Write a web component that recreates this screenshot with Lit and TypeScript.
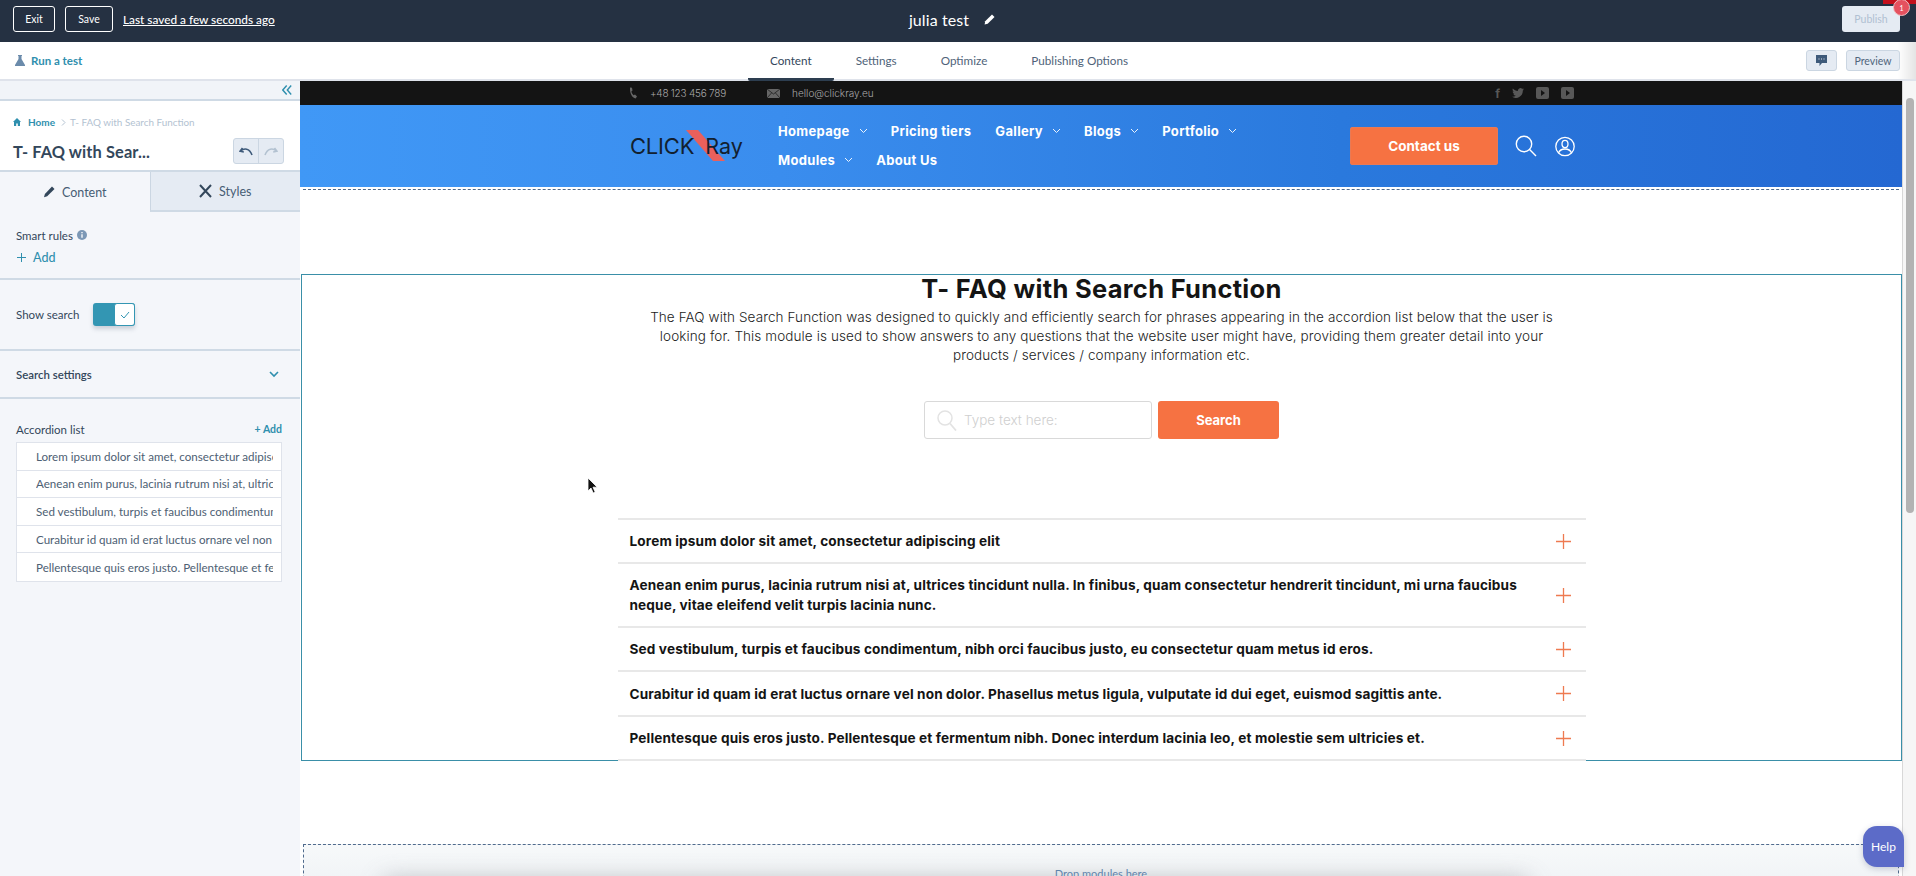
import { LitElement, html, css } from "lit";
import { customElement } from "lit/decorators.js";

const chev = html`<svg class="chev" width="9" height="6" viewBox="0 0 9 6"><path d="M1 1l3.5 3.5L8 1" fill="none" stroke="currentColor" stroke-width="1"/></svg>`;
const plus = html`<svg class="plus" width="15" height="15" viewBox="0 0 15 15"><path d="M7.5 0v15M0 7.5h15" stroke="#ee7a50" stroke-width="1.3" fill="none"/></svg>`;
const ytIcon = html`<svg width="13" height="12" viewBox="0 0 13 12"><rect width="13" height="12" rx="2" fill="#585858"/><path d="M5 3l4 3-4 3z" fill="#141414"/></svg>`;

const faq: any[] = [
  html`Lorem ipsum dolor sit amet, consectetur adipiscing elit`,
  html`Aenean enim purus, lacinia rutrum nisi at, ultrices tincidunt nulla. In finibus, quam consectetur hendrerit tincidunt, mi urna faucibus<br />neque, vitae eleifend velit turpis lacinia nunc.`,
  html`Sed vestibulum, turpis et faucibus condimentum, nibh orci faucibus justo, eu consectetur quam metus id eros.`,
  html`Curabitur id quam id erat luctus ornare vel non dolor. Phasellus metus ligula, vulputate id dui eget, euismod sagittis ante.`,
  html`Pellentesque quis eros justo. Pellentesque et fermentum nibh. Donec interdum lacinia leo, et molestie sem ultricies et.`,
];
const rowClass = ["r44", "r64", "r44", "r45", "r44"];
const items = [
  "Lorem ipsum dolor sit amet, consectetur adipiscing elit",
  "Aenean enim purus, lacinia rutrum nisi at, ultrices tincidunt nulla",
  "Sed vestibulum, turpis et faucibus condimentum, nibh orci",
  "Curabitur id quam id erat luctus ornare vel non dolor",
  "Pellentesque quis eros justo. Pellentesque et fermentum nibh",
];

@customElement("app-root")
export class AppRoot extends LitElement {
  static styles = css`
    :host { display: block; width: 100%; height: 100vh; overflow: hidden; position: relative; font-family: "Lato", "Noto Sans", sans-serif; color: #33475b; background: #fff; }
    * { box-sizing: border-box; }
    .top { height: 42px; background: #253142; display: grid; grid-template-columns: 1fr auto 1fr; align-items: center; padding: 0 16px 4px 13px; color: #fff; }
    .top-left { display: flex; align-items: center; gap: 10px; }
    .btn-o { height: 26px; border: 1px solid #fff; border-radius: 3px; font-size: 10.5px; display: flex; align-items: center; justify-content: center; }
    .exit { width: 42px; } .save { width: 48px; }
    .saved { font-size: 11.8px; text-decoration: underline; font-weight: 500; }
    .title { display: flex; align-items: center; gap: 15px; font-size: 16px; margin-left: -9px; letter-spacing: .1px; }
    .top-right { display: flex; justify-content: flex-end; }
    .publish { width: 58px; height: 26px; background: #e5ebf3; border-radius: 3px; color: #b0c0d2; font-size: 10.5px; display: flex; align-items: center; justify-content: center; }
    .notif-blob { position: absolute; right: 0; top: 0; width: 33px; height: 4px; background: #c4101c; }
    .notif { position: absolute; left: 1893px; top: -1px; width: 17px; height: 17px; border-radius: 50%; background: #e5515f; border: 1px solid #eebfc3; color: #fff; font-size: 7px; display: flex; align-items: center; justify-content: center; }

    .sub { height: 39px; border-bottom: 2px solid #dfe3eb; background: linear-gradient(90deg, #fff 1898px, #e4e4e4 1916px); display: grid; grid-template-columns: 1fr auto 1fr; align-items: stretch; padding: 0 16px 0 15px; }
    .run { display: flex; align-items: center; gap: 6px; font-size: 11.5px; font-weight: 700; color: #2f8fae; }
    .tabs { display: flex; font-size: 11.7px; color: #4f6379; margin-left: -17px; }
    .tab { display: flex; align-items: center; justify-content: center; padding: 0 22px; margin-bottom: -2px; border-bottom: 3px solid transparent; }
    .tab.on { color: #33475b; border-bottom-color: #2d3e50; border-radius: 2px; }
    .sub-right { display: flex; justify-content: flex-end; align-items: flex-start; gap: 9px; padding-top: 8px; }
    .sq { height: 21px; background: #e5ebf3; border: 1px solid #cbd6e2; border-radius: 3px; display: flex; align-items: center; justify-content: center; font-size: 10.5px; color: #50657c; }
    .sq.c { width: 31px; } .sq.p { width: 54px; }

    .body { display: flex; height: calc(100vh - 81px); }
    .panel { width: 300px; flex: none; background: #f4f6fa; display: flex; flex-direction: column; }
    .collapse { height: 20px; border-bottom: 2px solid #cfdae5; display: flex; align-items: center; justify-content: flex-end; padding-right: 8px; background: #f1f4f8; }
    .crumbhead { background: #fff; height: 71px; border-bottom: 2px solid #cfdae5; padding: 14px 16px 0 13px; }
    .crumbs { display: flex; align-items: center; font-size: 9.9px; height: 14px; color: #b3c2d1; }
    .crumbs .home { color: #2f8fae; font-weight: 700; margin: 0 6px 0 7px; font-size: 10px; }
    .crumbs .gt { margin-right: 4px; }
    .titlerow { display: flex; justify-content: space-between; align-items: center; margin-top: 9px; }
    .ptitle { font-size: 16.4px; font-weight: 700; color: #33475b; letter-spacing: 0.1px; }
    .undo { display: flex; width: 51px; height: 26px; background: #e5ebf3; border: 1px solid #cbd6e2; border-radius: 3px; }
    .undo span { flex: 1; display: flex; align-items: center; justify-content: center; }
    .undo span + span { border-left: 1px solid #cbd6e2; }
    .ptabs { display: flex; height: 40px; font-size: 12.5px; color: #475d74; flex: none; }
    .ptab { flex: 1; display: flex; align-items: center; justify-content: center; gap: 7px; }
    .ptab.off { background: #e5ebf3; border-left: 1px solid #cbd6e2; border-bottom: 2px solid #cfdae5; }
    .sec { padding: 0 16px; border-bottom: 2px solid #cfdae5; font-size: 11.5px; color: #33475b; flex: none; }
    .smart { height: 68px; padding-top: 16px; }
    .lbl-row { display: flex; align-items: center; gap: 4px; font-size: 11.5px; height: 14px; }
    .add { display: flex; align-items: center; gap: 7px; color: #2f8fae; font-size: 12.5px; font-weight: 500; margin-top: 8px; height: 14px; padding-left: 1px; }
    .show { height: 71px; display: flex; align-items: flex-start; gap: 14px; padding-top: 23px; }
    .show .t { line-height: 23px; }
    .toggle { width: 42px; height: 23px; border-radius: 3px; background: #3396b3; display: flex; justify-content: flex-end; box-shadow: 0 3px 4px rgba(80,100,120,.25); }
    .knob { width: 21px; height: 23px; background: #fff; border: 1px solid #3396b3; border-radius: 3px; display: flex; align-items: center; justify-content: center; }
    .settings { height: 48px; display: flex; align-items: center; justify-content: space-between; font-weight: 600; font-size: 11.4px; padding-right: 21px; padding-top: 1px; }
    .acc { padding: 22px 18px 0 16px; font-size: 11.5px; }
    .acc-head { display: flex; justify-content: space-between; align-items: center; height: 16px; color: #33475b; }
    .acc-add { color: #2f8fae; font-weight: 700; font-size: 10.5px; }
    .list { margin-top: 5px; border: 1px solid #dfe3eb; background: #fff; }
    .li { height: 27.6px; padding: 0 8px 0 19px; display: flex; align-items: center; border-bottom: 1px solid #dfe3eb; overflow: hidden; white-space: nowrap; color: #4d6073; font-size: 11.6px; }
    .li span { display: block; overflow: hidden; width: 100%; }
    .li:last-child { border-bottom: 0; }

    .canvas { width: 1602px; flex: none; background: #fff; display: flex; flex-direction: column; position: relative; font-family: "Inter", sans-serif; }
    .strip { height: 24px; flex: none; background: #141414; display: flex; align-items: center; padding-left: 329px; padding-right: 328px; color: #a8a8a8; font-size: 10px; font-weight: 300; }
    .strip .mail { margin-left: 41px; display: flex; gap: 12px; align-items: center; }
    .strip .phone { display: flex; align-items: center; gap: 13px; letter-spacing: -.22px; }
    .social { margin-left: auto; display: flex; gap: 12px; align-items: center; color: #585858; font-size: 12px; font-weight: 700; }
    .hdr { height: 82px; flex: none; background: linear-gradient(90deg, #4098f6 0%, #3a8dee 30%, #2a79dd 65%, #2468d2 100%); display: flex; align-items: center; padding-left: 330px; }
    .logo { width: 148px; flex: none; height: 40px; display: flex; align-items: center; position: relative; }
    .logo-text { color: #12202f; font-size: 22px; font-weight: 400; letter-spacing: -0.2px; display: flex; align-items: baseline; position: relative; }
    .logo-text .ray { font-size: 21.5px; letter-spacing: 0; margin-left: 11px; font-weight: 400; }
    .slash { position: absolute; left: 56px; top: 4px; }
    .nav { width: 572px; flex: none; display: flex; flex-wrap: wrap; color: #fff; font-size: 13px; font-weight: 700; row-gap: 9px; margin-top: -2px; }
    .nav a { display: flex; align-items: center; height: 20px; margin-right: 24px; letter-spacing: 0.32px; }
    .nav .chev { margin-left: 9px; margin-right: -1px; opacity: .9; }
    .contact { width: 148px; height: 38px; flex: none; background: #f67242; border-radius: 3px; color: #fff; font-size: 13.5px; font-weight: 700; display: flex; align-items: center; justify-content: center; box-shadow: 0 0 0 1px #e97a55 inset; }
    .hicons { display: flex; gap: 18px; margin-left: 17px; align-items: center; }
    .dash { height: 3px; margin: 2px 3px 0 3px; border-top: 1px dashed #506b8d; flex: none; }
    .module { margin: 82px 0 0 1px; height: 487px; border: 1px solid #3a8fa8; display: flex; flex-direction: column; align-items: center; flex: none; }
    .module h1 { margin: 0; font-size: 25.5px; line-height: 28px; font-weight: 700; color: #141414; letter-spacing: 0.3px; }
    .module p { margin: 5px 0 0; width: 920px; text-align: center; font-size: 13.5px; line-height: 19px; font-weight: 300; color: #1c1c1c; letter-spacing: 0.1px; }
    .searchrow { margin-top: 36px; display: flex; gap: 6px; }
    .input { width: 228px; height: 38px; border: 1px solid #d9d9d9; border-radius: 3px; display: flex; align-items: center; gap: 7px; padding-left: 12px; font-size: 13.5px; font-weight: 300; color: #cfcfcf; }
    .sbtn { width: 121px; height: 38px; background: #f67242; border-radius: 3px; color: #fff; font-size: 13px; font-weight: 700; display: flex; align-items: center; justify-content: center; }
    .accordion { margin-top: 79px; width: 968px; border-top: 2px solid #e8e8e8; background: #fff; margin-bottom: -1px; position: relative; }
    .row { display: flex; justify-content: space-between; align-items: center; padding: 0 15px 0 12px; border-bottom: 2px solid #e8e8e8; font-size: 13.6px; font-weight: 700; line-height: 20px; color: #141414; letter-spacing: 0.14px; }
    .r44 { height: 44px; } .r64 { height: 64px; } .r45 { height: 45px; }
    .drop { margin: 83px 3px 0 3px; height: 40px; flex: none; border: 1px dashed #506b8d; border-bottom: 0; background: linear-gradient(#f7f9fa, #f0f3f6); position: relative; overflow: hidden; text-align: center; font-size: 11px; font-family: "Lato", sans-serif; color: #5f84ad; padding-top: 22px; }
    .drop::before { content: ""; position: absolute; left: 80px; right: 370px; bottom: -22px; height: 26px; background: #a9adb1; filter: blur(12px); opacity: .8; }
    .drop span { position: relative; }
    .help { position: absolute; right: -2px; bottom: 9px; width: 41px; height: 41px; background: #5c6bc8; border-radius: 14px 14px 0 14px; color: #fff; font-size: 12px; font-family: "Lato", sans-serif; display: flex; align-items: center; justify-content: center; box-shadow: 0 2px 6px rgba(60,70,110,.25); z-index: 2; }
    .sbar { flex: 1; background: #f6f6f6; border-left: 1px solid #d8d8d8; padding: 17px 2px 0 3px; }
    .thumb { height: 415px; background: #b3b3b3; border-radius: 4px; }
    .cursor { position: absolute; left: 587px; top: 477px; }
  `;

  render() {
    return html`
      <div class="top">
        <div class="top-left">
          <div class="btn-o exit">Exit</div>
          <div class="btn-o save">Save</div>
          <div class="saved">Last saved a few seconds ago</div>
        </div>
        <div class="title"><span>julia test</span>
          <svg width="11" height="11" viewBox="0 0 11 11"><path d="M8 .5l2.5 2.5-6.8 6.8L.6 10.400l.6-3.100z" fill="#fff"/></svg>
        </div>
        <div class="top-right"><div class="publish">Publish</div></div>
      </div>
      <div class="notif-blob"></div>
      <div class="notif">1</div>
      <div class="sub">
        <div class="run">
          <svg width="10" height="11" viewBox="0 0 10 11"><path d="M3 0h4v1H6.500v3L10 10v1H0v-1l3.500-6V1H3z" fill="#6b8bab"/></svg>
          Run a test
        </div>
        <div class="tabs">
          <div class="tab on">Content</div><div class="tab">Settings</div><div class="tab">Optimize</div><div class="tab">Publishing Options</div>
        </div>
        <div class="sub-right">
          <div class="sq c"><svg width="11" height="11" viewBox="0 0 11 11"><path d="M0 0h11v8H6l-2.500 3V8H0z" fill="#3e5a7a"/><path d="M2.500 4h1M5 4h1M7.500 4h1" stroke="#e5ebf3" stroke-width="1"/></svg></div>
          <div class="sq p">Preview</div>
        </div>
      </div>
      <div class="body">
        <div class="panel">
          <div class="collapse">
            <svg width="10" height="10" viewBox="0 0 10 10"><path d="M4.700 .5L.8 5l3.900 4.500M9.200 .5L5.300 5l3.900 4.500" fill="none" stroke="#2f8fae" stroke-width="1.400"/></svg>
          </div>
          <div class="crumbhead">
            <div class="crumbs">
              <svg width="8" height="8" viewBox="0 0 8 8"><path d="M4 0L0 4h1v4h2.200V5.400h1.600V8H7V4h1z" fill="#2f8fae"/></svg>
              <span class="home">Home</span>
              <svg class="gt" width="5" height="7" viewBox="0 0 5 7"><path d="M1 .5l3 3-3 3" fill="none" stroke="#b3c2d1"/></svg>
              <span>T- FAQ with Search Function</span>
            </div>
            <div class="titlerow">
              <div class="ptitle">T- FAQ with Sear...</div>
              <div class="undo">
                <span><svg width="14" height="9" viewBox="0 0 14 9"><path d="M3.500 1L1 4.200 4.800 5M1.500 4.200C5 .8 10.500 1 13 8" fill="none" stroke="#3e5a7a" stroke-width="1.600"/></svg></span>
                <span><svg width="14" height="9" viewBox="0 0 14 9"><path d="M10.500 1L13 4.200 9.200 5M12.500 4.200C9 .8 3.500 1 1 8" fill="none" stroke="#b3c2d1" stroke-width="1.600"/></svg></span>
              </div>
            </div>
          </div>
          <div class="ptabs">
            <div class="ptab">
              <svg width="12" height="12" viewBox="0 0 12 12"><path d="M9 .5l2.500 2.500-7.300 7.300-3.200.9.900-3.200z" fill="#33475b"/></svg>Content
            </div>
            <div class="ptab off">
              <svg width="13" height="14" viewBox="0 0 13 14"><path d="M1 1l11 12M12 1L1 13" stroke="#33475b" stroke-width="2" fill="none"/></svg>Styles
            </div>
          </div>
          <div class="sec smart">
            <div class="lbl-row">Smart rules
              <svg width="10" height="10" viewBox="0 0 10 10"><circle cx="5" cy="5" r="5" fill="#7c98b6"/><path d="M5 4.300v3.400M5 2v1.200" stroke="#fff" stroke-width="1.300"/></svg>
            </div>
            <div class="add"><svg width="9" height="9" viewBox="0 0 9 9"><path d="M4.500 0v9M0 4.500h9" stroke="#2f8fae" stroke-width="1"/></svg>Add</div>
          </div>
          <div class="sec show">
            <span class="t">Show search</span>
            <div class="toggle"><div class="knob"><svg width="10" height="8" viewBox="0 0 10 8"><path d="M1 4l3 3 5-6" fill="none" stroke="#3396b3" stroke-width="1"/></svg></div></div>
          </div>
          <div class="sec settings">Search settings
            <svg width="10" height="7" viewBox="0 0 10 7"><path d="M1 1l4 4 4-4" fill="none" stroke="#2f8fae" stroke-width="1.600"/></svg>
          </div>
          <div class="acc">
            <div class="acc-head"><span>Accordion list</span><span class="acc-add">+ Add</span></div>
            <div class="list">
              ${items.map((t) => html`<div class="li"><span>${t}</span></div>`)}
            </div>
          </div>
        </div>
        <div class="canvas">
          <div class="strip">
            <div class="phone">
              <svg width="8" height="12" viewBox="0 0 8 12"><path d="M1 .5l2 .3.500 2.600L2.400 4.600c.3 1.500 1 2.600 2.200 3.600l1.400-.8L8 9.500 6.600 11.500C3 10.800 .6 6 1 .5z" fill="#666"/></svg>
              <span>+48 123 456 789</span>
            </div>
            <div class="mail">
              <svg width="13" height="9" viewBox="0 0 13 9"><rect width="13" height="9" fill="#666"/><path d="M0 0l6.500 5L13 0M0 9l4.500-5M13 9L8.500 4" stroke="#141414" fill="none" stroke-width=".7"/></svg>
              <span>hello@clickray.eu</span>
            </div>
            <div class="social">
              <span>f</span>
              <svg width="12" height="10" viewBox="0 0 12 10"><path d="M12 1.200c-.4.200-.9.300-1.400.4.500-.3.900-.8 1.100-1.400-.5.300-1 .5-1.600.6A2.500 2.500 0 0 0 5.900 3C3.900 2.900 2.100 1.900.9.400.200 1.500.6 3 1.700 3.800c-.4 0-.8-.1-1.100-.3 0 1.200.9 2.300 2 2.500-.4.100-.8.100-1.100 0 .3 1 1.200 1.700 2.300 1.700A5 5 0 0 1 0 8.800 7 7 0 0 0 10.800 2.600c.5-.4.900-.8 1.200-1.400z" fill="#585858"/></svg>
              ${ytIcon}${ytIcon}
            </div>
          </div>
          <div class="hdr">
            <div class="logo">
              <svg class="slash" width="39" height="31" viewBox="0 0 39 31"><path d="M0 0h12l27 31H27z" fill="#e9605c"/></svg>
              <div class="logo-text"><span>CLICK</span><span class="ray">Ray</span></div>
            </div>
            <div class="nav">
              <a>Homepage${chev}</a><a>Pricing tiers</a><a>Gallery${chev}</a><a>Blogs${chev}</a><a>Portfolio${chev}</a>
              <a>Modules${chev}</a><a>About Us</a>
            </div>
            <div class="contact">Contact us</div>
            <div class="hicons">
              <svg width="22" height="22" viewBox="0 0 22 22"><circle cx="9" cy="9" r="7.700" fill="none" stroke="#fff" stroke-width="1.400"/><path d="M14.600 14.600L21 21" stroke="#fff" stroke-width="1.400"/></svg>
              <svg width="20" height="21" viewBox="0 0 20 21"><circle cx="10" cy="10.500" r="9.200" fill="none" stroke="#fff" stroke-width="1.300"/><ellipse cx="10" cy="8" rx="3" ry="3.600" fill="none" stroke="#fff" stroke-width="1.300"/><path d="M3.500 17c1-2.700 3.500-4 6.500-4s5.500 1.300 6.500 4" fill="none" stroke="#fff" stroke-width="1.300"/></svg>
            </div>
          </div>
          <div class="dash"></div>
          <div class="module">
            <h1>T- FAQ with Search Function</h1>
            <p>The FAQ with Search Function was designed to quickly and efficiently search for phrases appearing in the accordion list below that the user is looking for. This module is used to show answers to any questions that the website user might have, providing them greater detail into your products / services / company information etc.</p>
            <div class="searchrow">
              <div class="input">
                <svg width="20" height="21" viewBox="0 0 20 21"><circle cx="8" cy="8" r="7" fill="none" stroke="#e3e3e3" stroke-width="1.500"/><path d="M13 13.500l6 7" stroke="#e3e3e3" stroke-width="1.800"/></svg>
                <span>Type text here:</span>
              </div>
              <div class="sbtn">Search</div>
            </div>
            <div class="accordion">
              ${faq.map((t, i) => html`<div class="row ${rowClass[i]}"><span>${t}</span>${plus}</div>`)}
            </div>
          </div>
          <div class="drop"><span>Drop modules here</span></div>
          <div class="help">Help</div>
        </div>
        <div class="sbar"><div class="thumb"></div></div>
      </div>
      <svg class="cursor" width="12" height="18" viewBox="0 0 12 18"><path d="M1 1v13l3-3 2.200 5 2-.9L6 10.200h4.200z" fill="#111" stroke="#fff" stroke-width=".8"/></svg>
    `;
  }
}
